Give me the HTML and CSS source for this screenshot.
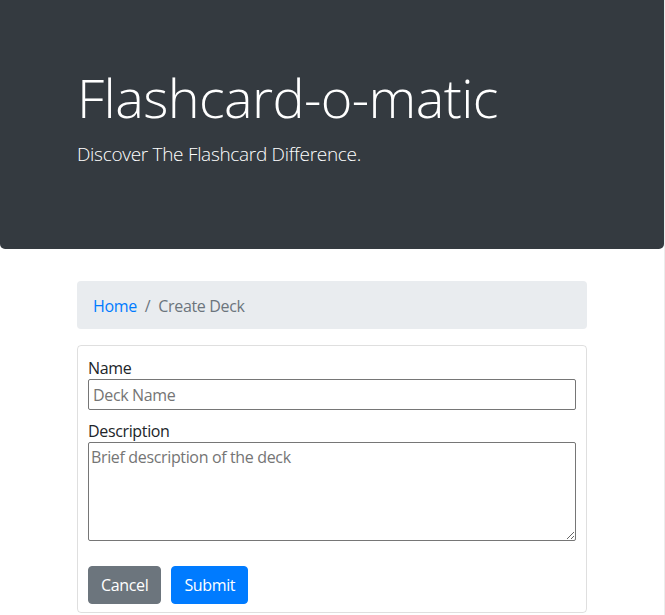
FILE: index.html
```html
<!DOCTYPE html>
<html lang="en">
<head>
<meta charset="utf-8">
<title>Flashcard-o-matic</title>
<link rel="stylesheet" href="styles.css">
</head>
<body>
<header class="jumbotron">
  <div class="container">
    <h1 class="display">Flashcard-o-matic</h1>
    <p class="lead">Discover The Flashcard Difference.</p>
  </div>
</header>
<main class="container">
  <nav class="breadcrumb">
    <a class="crumb-link" href="#">Home</a>
    <span class="crumb-sep">/</span>
    <span class="crumb-active">Create Deck</span>
  </nav>
  <form class="card">
    <label class="field-label" for="name">Name</label>
    <input class="field-input" id="name" type="text" placeholder="Deck Name">
    <label class="field-label field-label-gap" for="description">Description</label>
    <textarea class="field-textarea" id="description" placeholder="Brief description of the deck"></textarea>
    <div class="actions">
      <button type="button" class="btn btn-secondary">Cancel</button>
      <button type="submit" class="btn btn-primary">Submit</button>
    </div>
  </form>
</main>
</body>
</html>
```
FILE: styles.css
```css
* { box-sizing: border-box; }
html { background: #fff; }
body {
  margin: 0;
  min-height: 100vh;
  border-right: 1px solid #ececec;
  font-family: "Open Sans", "Noto Sans", sans-serif;
  font-size: 16px;
  line-height: 24px;
  letter-spacing: -0.35px;
  color: #212529;
}
.container {
  width: 540px;
  margin: 0 auto;
  padding: 0 15px;
}
.jumbotron {
  background: #343a40;
  color: #fff;
  padding: 64px 0 65px;
  margin-bottom: 32px;
  border-radius: 0 0 5px 5px;
}
.display {
  margin: 0 0 8px;
  font-size: 54px;
  font-weight: 300;
  line-height: 66px;
  letter-spacing: -0.6px;
}
.lead {
  margin: 0 0 16px;
  padding-top: 2px;
  font-size: 19px;
  font-weight: 300;
  line-height: 28px;
  letter-spacing: -0.3px;
}
.breadcrumb {
  display: flex;
  background: #e9ecef;
  border-radius: 4px;
  padding: 13px 16px 11px;
  margin-bottom: 16px;
  color: #6c757d;
}
.crumb-link { color: #007bff; text-decoration: none; }
.crumb-sep { padding: 0 8px; }
.card {
  display: flex;
  flex-direction: column;
  align-items: stretch;
  border: 1px solid rgba(0,0,0,.125);
  border-radius: 4px;
  padding: 9px 10px 8px;
  margin: 0;
}
.field-label { display: block; padding-top: 2px; line-height: 22px; }
.field-label-gap { margin-top: 8px; }
.field-input, .field-textarea {
  width: 100%;
  border: 1px solid #767676;
  border-radius: 2px;
  font-family: inherit;
  font-size: 16px;
  letter-spacing: -0.35px;
  color: #212529;
  margin: 0;
}
.field-input { height: 31px; padding: 1px 4px; }
.field-textarea { height: 99px; padding: 2px 2px; line-height: 24px; resize: both; display: block; }
.field-input::placeholder, .field-textarea::placeholder { color: #757575; }
.actions { display: flex; gap: 10px; margin-top: 25px; }
.btn {
  font-family: inherit;
  font-size: 16px;
  letter-spacing: -0.35px;
  line-height: 24px;
  padding: 6px 12px;
  border: 1px solid transparent;
  border-radius: 4px;
  color: #fff;
  cursor: pointer;
}
.btn-secondary { background: #6c757d; border-color: #6c757d; }
.btn-primary { background: #007bff; border-color: #007bff; }
```
